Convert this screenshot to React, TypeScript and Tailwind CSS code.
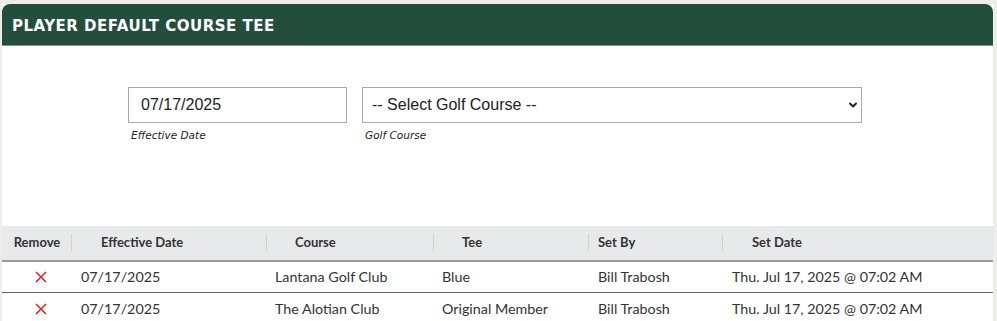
import { ChevronDown } from 'lucide-react'

const ROWS = [
  { date: '07/17/2025', course: 'Lantana Golf Club', tee: 'Blue', by: 'Bill Trabosh', setDate: 'Thu. Jul 17, 2025 @ 07:02 AM' },
  { date: '07/17/2025', course: 'The Alotian Club', tee: 'Original Member', by: 'Bill Trabosh', setDate: 'Thu. Jul 17, 2025 @ 07:02 AM' },
]

const COLS = 'grid grid-cols-[69px_195px_167px_155px_134px_1fr]'

function Sep() {
  return <span className="absolute left-0 top-[8px] h-[17px] w-px bg-[#c9d9b4]" />
}

export default function App() {
  return (
    <main className="min-h-screen bg-[#eeede9] pl-[2px] pr-[4px] pt-[4px] font-['Lato',sans-serif]">
      <div className="bg-white">
        {/* Header */}
        <div className="h-[42px] rounded-t-[8px] bg-[#234e3e] border-b border-[#8a8f8c] flex items-center px-[10px] pt-[3px]">
          <h1 className="font-['DejaVu_Sans',sans-serif] text-[15px] font-bold tracking-[0.5px] text-white">
            PLAYER DEFAULT COURSE TEE
          </h1>
        </div>

        {/* Form */}
        <div className="h-[180px] pt-[41px] pl-[126px] flex gap-[15px]">
          <div>
            <div className="w-[219px] h-[36px] border border-[#aaa] flex items-center px-[12px] font-['Liberation_Sans',sans-serif] text-[16px] text-[#222]">
              07/17/2025
            </div>
            <p className="mt-[5px] pl-[3px] font-['DejaVu_Sans',sans-serif] italic text-[10.5px] text-[#222]">Effective Date</p>
          </div>
          <div>
            <div className="w-[500px] h-[36px] border border-[#aaa] flex items-center justify-between pl-[9px] pr-[2px] font-['Liberation_Sans',sans-serif] text-[16px] text-[#222]">
              -- Select Golf Course --
              <ChevronDown size={12} strokeWidth={4} className="text-[#222]" />
            </div>
            <p className="mt-[5px] pl-[3px] font-['DejaVu_Sans',sans-serif] italic text-[10.5px] text-[#222]">Golf Course</p>
          </div>
        </div>

        {/* Table */}
        <div className={`${COLS} h-[36px] bg-[#e8e9eb] border-b-2 border-[#999] text-[13px] font-bold text-[#333] items-center`}>
          <div className="text-center pl-[1px]">Remove</div>
          <div className="relative h-full flex items-center pl-[30px]"><Sep />Effective Date</div>
          <div className="relative h-full flex items-center pl-[29px]"><Sep />Course</div>
          <div className="relative h-full flex items-center pl-[29px]"><Sep />Tee</div>
          <div className="relative h-full flex items-center pl-[10px]"><Sep />Set By</div>
          <div className="relative h-full flex items-center pl-[30px]"><Sep />Set Date</div>
        </div>
        {ROWS.map((r, i) => (
          <div key={i} className={`${COLS} h-[31px] items-center text-[14.3px] text-[#333] ${i === 0 ? 'border-b border-[#666]' : ''}`}>
            <div className="flex justify-center pl-[8px]">
              <svg width="12" height="12" viewBox="0 0 12 12" className="text-[#e3262b]">
                <path d="M1 1L11 11M11 1L1 11" stroke="currentColor" strokeWidth="1.6" />
              </svg>
            </div>
            <div className="pl-[10px]">{r.date}</div>
            <div className="pl-[9px]">{r.course}</div>
            <div className="pl-[9px]">{r.tee}</div>
            <div className="pl-[10px]">{r.by}</div>
            <div className="pl-[10px]">{r.setDate}</div>
          </div>
        ))}
      </div>
    </main>
  )
}
